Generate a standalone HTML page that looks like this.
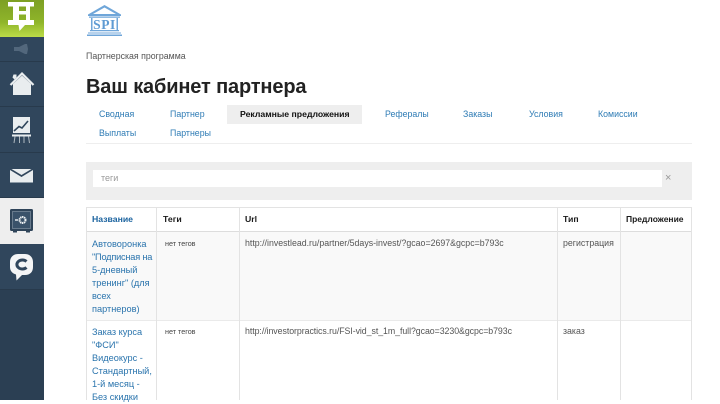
<!DOCTYPE html>
<html lang="ru"><head><meta charset="utf-8">
<style>
html,body{margin:0;padding:0;width:720px;height:400px;overflow:hidden;background:#fff;font-family:"Liberation Sans",sans-serif;}
.a{position:absolute;white-space:nowrap}
#side{position:absolute;left:0;top:0;width:44px;height:400px;background:#2b3f53}
.s{position:absolute;left:0;width:44px;background:#30465c;border-bottom:1px solid #283a4c;box-sizing:border-box}
.tab{position:absolute;font-size:8.8px;color:#2f7cb5;line-height:12px;white-space:nowrap}
.b{position:absolute;background:#e3e3e3}
.th{position:absolute;font-size:8.7px;font-weight:bold;color:#1a1a1a;white-space:nowrap;line-height:12px}
.td{position:absolute;font-size:8.8px;color:#555;white-space:nowrap;line-height:12px}
.l{position:absolute;font-size:9.2px;color:#2a74ad;line-height:13px;white-space:nowrap}
.t{position:absolute;font-size:7.2px;color:#444;white-space:nowrap;line-height:10px}
</style></head><body>
<div id="side">
<div style="position:absolute;left:0;top:0;width:44px;height:37px;background:linear-gradient(#7d9f24,#8fb52a 60%,#bcdc48)"></div>
<svg class="a" style="left:0;top:0" width="44" height="37" viewBox="0 0 44 37"><path fill="#fff" fill-rule="evenodd" d="M8 2H34V6.500H30V20H34V25H25L19.500 31L18.500 25H8V20H13V6.500H8ZM19 6.500V11H26V6.500ZM19 14.500V20H26V14.500Z"/></svg>
<div class="s" style="top:37px;height:25px"></div>
<svg class="a" style="left:14px;top:42px" width="15" height="14" viewBox="0 0 15 14"><path fill="#52677c" d="M0 5H5L11 2H13L14 7L13 12H11L5 9H0Z"/></svg>
<div class="s" style="top:62px;height:45px"></div>
<svg class="a" style="left:9px;top:71px" width="26" height="26" viewBox="0 0 26 26"><path fill="#e9edef" d="M13 4.500L22 13V24H4V13Z"/><path fill="none" stroke="#e9edef" stroke-width="2.200" d="M1.500 14L13 2.500L24.500 14"/><path fill="#e9edef" d="M4.500 3.500H7.500V6.500L5.500 8.500L3.500 6.500Z"/></svg>
<div class="s" style="top:107px;height:46px"></div>
<svg class="a" style="left:12px;top:116px" width="20" height="28" viewBox="0 0 20 28"><path fill="#e9edef" d="M1 1H18V17H1Z"/><path fill="none" stroke="#30465c" stroke-width="1.600" d="M2 15L7 10.500L10 12L16 5"/><path fill="#e9edef" d="M0 18.500H19V20.500H0Z"/><path fill="none" stroke="#aeb8c0" d="M3 20.500L2 27M7.500 20.500V27M12 20.500V27M16.500 20.500L17.500 27"/></svg>
<div class="s" style="top:153px;height:45px"></div>
<svg class="a" style="left:10px;top:169px" width="23" height="14" viewBox="0 0 23 14"><path fill="#e9edef" d="M0 1L11.500 8L23 1V13.500H0ZM1.500 0H21.500L11.500 6Z"/></svg>
<div style="position:absolute;left:0;top:198px;width:44px;height:46px;background:#eeeeee"></div>
<svg class="a" style="left:10px;top:209px" width="24" height="25" viewBox="0 0 24 25"><rect x="0" y="0" width="23" height="22" rx="1.500" fill="#2f4459"/><rect x="2.500" y="2.500" width="18" height="17" fill="#3a526a" stroke="#8d9cab" stroke-width=".6"/><circle cx="12.500" cy="11" r="3" fill="none" stroke="#eef1f3" stroke-width="2" stroke-dasharray="1.400 .5"/><path stroke="#eef1f3" stroke-width="1.400" d="M5 11H8"/><path fill="#2f4459" d="M3 22H7V23.500H3ZM16 22H20V23.500H16Z"/></svg>
<div class="s" style="top:244px;height:46px;background:#30465c"></div>
<svg class="a" style="left:10px;top:254px" width="24" height="28" viewBox="0 0 24 28"><path fill="#f4f5f6" d="M8 0H15C20 0 23 3.500 23 8V13C23 18 20 21 15 21H12L6.500 26.500L6 20.500C2.500 19.500 0 17 0 13V8C0 3.500 3 0 8 0Z"/><path fill="none" stroke="#30465c" stroke-width="3" d="M16.500 7.500A5.500 4.500 0 1 0 16.500 13.500"/></svg>
</div>

<svg class="a" style="left:86px;top:4px" width="38" height="33" viewBox="0 0 38 33">
<path fill="#6fa6d9" d="M18.500 1L35 10.500V12H2V10.500ZM18.500 3.500L7 10H30Z"/>
<path fill="#6fa6d9" d="M3 12.500H34V13.800H3ZM5 14H6.500V26H5ZM30.500 14H32V26H30.500ZM4 26H33V27.300H4ZM2 28.500H35V29.500H2ZM1 30.500H36V32H1Z"/>
<text x="18.500" y="25" text-anchor="middle" font-family="Liberation Serif" font-size="13.500" font-weight="bold" letter-spacing=".6" fill="#5f9bd3">SPI</text>
</svg>

<div class="a" style="left:86px;top:50px;font-size:8.800px;line-height:12px;color:#555">Партнерская программа</div>
<div class="a" style="left:86px;top:74px;font-size:20px;font-weight:bold;line-height:26px;letter-spacing:-.15px;color:#222">Ваш кабинет партнера</div>

<div style="position:absolute;left:227px;top:105px;width:135px;height:19px;background:#eeeeee"></div>
<div class="tab" style="left:99px;top:108px">Сводная</div>
<div class="tab" style="left:170px;top:108px">Партнер</div>
<div class="tab" style="left:240px;top:108px;color:#111;font-weight:bold;font-size:8.700px">Рекламные предложения</div>
<div class="tab" style="left:385px;top:108px">Рефералы</div>
<div class="tab" style="left:463px;top:108px">Заказы</div>
<div class="tab" style="left:529px;top:108px">Условия</div>
<div class="tab" style="left:598px;top:108px">Комиссии</div>
<div class="tab" style="left:99px;top:127px">Выплаты</div>
<div class="tab" style="left:170px;top:127px">Партнеры</div>
<div style="position:absolute;left:86px;top:143px;width:606px;height:1px;background:#eee"></div>

<div style="position:absolute;left:86px;top:162px;width:606px;height:38px;background:#eeeeee"></div>
<div style="position:absolute;left:93px;top:170px;width:569px;height:17px;background:#fff"></div>
<div class="a" style="left:101px;top:172px;font-size:9px;line-height:12px;color:#999">теги</div>
<div class="a" style="left:665px;top:172px;font-size:11px;line-height:12px;color:#999">×</div>

<div style="position:absolute;left:86px;top:231px;width:606px;height:89px;background:#f9f9f9"></div>
<div class="b" style="left:86px;top:207px;width:606px;height:1px"></div>
<div class="b" style="left:86px;top:231px;width:606px;height:1px;background:#ddd"></div>
<div class="b" style="left:86px;top:320px;width:606px;height:1px;background:#eaeaea"></div>
<div class="b" style="left:86px;top:207px;width:1px;height:193px"></div>
<div class="b" style="left:156px;top:207px;width:1px;height:193px"></div>
<div class="b" style="left:239px;top:207px;width:1px;height:193px"></div>
<div class="b" style="left:557px;top:207px;width:1px;height:193px"></div>
<div class="b" style="left:620px;top:207px;width:1px;height:193px"></div>
<div class="b" style="left:691px;top:207px;width:1px;height:193px"></div>

<div class="th" style="left:92px;top:213px;color:#1b639f">Название</div>
<div class="th" style="left:163px;top:213px">Теги</div>
<div class="th" style="left:245px;top:213px">Url</div>
<div class="th" style="left:563px;top:213px">Тип</div>
<div class="th" style="left:626px;top:213px;font-size:8.500px">Предложение</div>

<div class="l" style="left:92px;top:238px">Автоворонка</div>
<div class="l" style="left:92px;top:251px;letter-spacing:-.2px">"Подписная на</div>
<div class="l" style="left:92px;top:264px">5-дневный</div>
<div class="l" style="left:92px;top:277px">тренинг" (для</div>
<div class="l" style="left:92px;top:290px">всех</div>
<div class="l" style="left:92px;top:303px">партнеров)</div>
<div class="t" style="left:165px;top:239px">нет тегов</div>
<div class="td" style="left:245px;top:237px">http://investlead.ru/partner/5days-invest/?gcao=2697&amp;gcpc=b793c</div>
<div class="td" style="left:563px;top:237px">регистрация</div>

<div class="l" style="left:92px;top:326px">Заказ курса</div>
<div class="l" style="left:92px;top:339px">"ФСИ"</div>
<div class="l" style="left:92px;top:352px">Видеокурс -</div>
<div class="l" style="left:92px;top:365px">Стандартный,</div>
<div class="l" style="left:92px;top:378px">1-й месяц -</div>
<div class="l" style="left:92px;top:391px">Без скидки</div>
<div class="t" style="left:165px;top:327px">нет тегов</div>
<div class="td" style="left:245px;top:325px;letter-spacing:-.06px">http://investorpractics.ru/FSI-vid_st_1m_full?gcao=3230&amp;gcpc=b793c</div>
<div class="td" style="left:563px;top:325px">заказ</div>
</body></html>
